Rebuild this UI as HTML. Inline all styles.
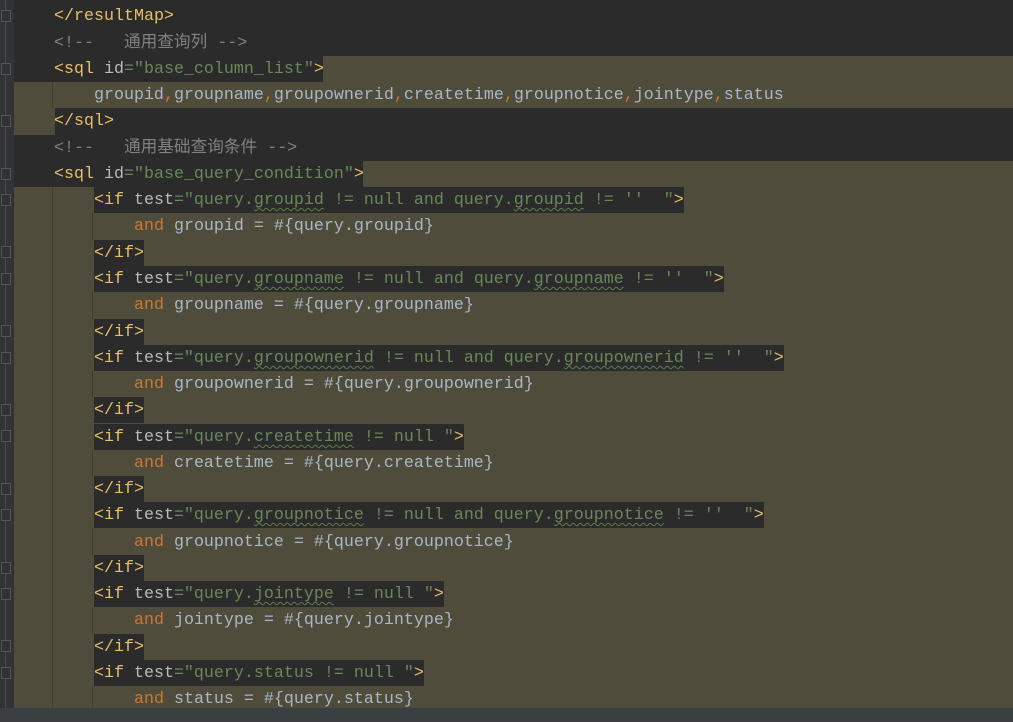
<!DOCTYPE html>
<html><head><meta charset="utf-8"><style>
html,body{margin:0;padding:0;}
body{width:1013px;height:722px;background:#2b2b2b;position:relative;overflow:hidden;
font-family:"Liberation Mono","Noto Sans CJK SC",monospace;font-size:16.67px;}
.gut{position:absolute;left:0;top:0;width:14px;height:722px;background:#313335;}
.gut:after{content:"";position:absolute;left:5px;top:0;height:722px;width:1px;background:#4a4c4e;}
.l{position:absolute;left:14px;width:999px;height:27px;line-height:28px;white-space:pre;color:#a9b7c6;}
.o{background:#4f4c3b;}
.d{background:#2b2b2b;display:inline-block;height:26px;line-height:27px;vertical-align:top;}
.t{color:#e8bf6a}.a{color:#bababa}.v{color:#6a8759}.k{color:#cc7832}.c{color:#808080}
.w{text-decoration:underline wavy #5f7d4a;text-decoration-thickness:1px;text-underline-offset:3px}
.g{position:absolute;width:1px;background:#3f3e36;}
.f{position:absolute;left:1px;width:10px;height:12px;border:1px solid #555;box-sizing:border-box;background:#313335;}
.bar{position:absolute;left:0;top:708px;width:1013px;height:14px;background:#3c3f41;}
</style></head><body>
<div class="gut"></div>
<div class="l" style="top:3px"><span>    </span><span class="t">&lt;/resultMap&gt;</span></div>
<div class="l" style="top:30px"><span class="c">    &lt;!--   通用查询列 --&gt;</span></div>
<div class="l" style="top:56px;height:26px;background:linear-gradient(90deg,#2b2b2b 309px,#4f4c3b 309px)">    <span class="t">&lt;sql </span><span class="a">id</span><span class="v">="base_column_list"</span><span class="t">&gt;</span></div>
<div class="l o" style="top:82px">        groupid<span class="k">,</span>groupname<span class="k">,</span>groupownerid<span class="k">,</span>createtime<span class="k">,</span>groupnotice<span class="k">,</span>jointype<span class="k">,</span>status</div>
<div class="l" style="top:108px;background:linear-gradient(90deg,#4f4c3b 41px,#2b2b2b 41px)">    <span class="t">&lt;/sql&gt;</span></div>
<div class="l" style="top:135px"><span class="c">    &lt;!--   通用基础查询条件 --&gt;</span></div>
<div class="l" style="top:161px;background:linear-gradient(90deg,#2b2b2b 349px,#4f4c3b 349px)">    <span class="t">&lt;sql </span><span class="a">id</span><span class="v">="base_query_condition"</span><span class="t">&gt;</span></div>

<div class="l o" style="top:187px">        <span class="d"><span class="t">&lt;if </span><span class="a">test</span><span class="v">="query.<span class="w">groupid</span> != null and query.<span class="w">groupid</span> != ''  "</span><span class="t">&gt;</span></span></div>
<div class="l o" style="top:213px">            <span class="k">and</span> groupid = #{query.groupid}</div>
<div class="l o" style="top:240px">        <span class="d"><span class="t">&lt;/if&gt;</span></span></div>
<div class="l o" style="top:266px">        <span class="d"><span class="t">&lt;if </span><span class="a">test</span><span class="v">="query.<span class="w">groupname</span> != null and query.<span class="w">groupname</span> != ''  "</span><span class="t">&gt;</span></span></div>
<div class="l o" style="top:292px">            <span class="k">and</span> groupname = #{query.groupname}</div>
<div class="l o" style="top:319px">        <span class="d"><span class="t">&lt;/if&gt;</span></span></div>
<div class="l o" style="top:345px">        <span class="d"><span class="t">&lt;if </span><span class="a">test</span><span class="v">="query.<span class="w">groupownerid</span> != null and query.<span class="w">groupownerid</span> != ''  "</span><span class="t">&gt;</span></span></div>
<div class="l o" style="top:371px">            <span class="k">and</span> groupownerid = #{query.groupownerid}</div>
<div class="l o" style="top:397px">        <span class="d"><span class="t">&lt;/if&gt;</span></span></div>
<div class="l o" style="top:424px">        <span class="d"><span class="t">&lt;if </span><span class="a">test</span><span class="v">="query.<span class="w">createtime</span> != null "</span><span class="t">&gt;</span></span></div>
<div class="l o" style="top:450px">            <span class="k">and</span> createtime = #{query.createtime}</div>
<div class="l o" style="top:476px">        <span class="d"><span class="t">&lt;/if&gt;</span></span></div>
<div class="l o" style="top:502px">        <span class="d"><span class="t">&lt;if </span><span class="a">test</span><span class="v">="query.<span class="w">groupnotice</span> != null and query.<span class="w">groupnotice</span> != ''  "</span><span class="t">&gt;</span></span></div>
<div class="l o" style="top:529px">            <span class="k">and</span> groupnotice = #{query.groupnotice}</div>
<div class="l o" style="top:555px">        <span class="d"><span class="t">&lt;/if&gt;</span></span></div>
<div class="l o" style="top:581px">        <span class="d"><span class="t">&lt;if </span><span class="a">test</span><span class="v">="query.<span class="w">jointype</span> != null "</span><span class="t">&gt;</span></span></div>
<div class="l o" style="top:607px">            <span class="k">and</span> jointype = #{query.jointype}</div>
<div class="l o" style="top:634px">        <span class="d"><span class="t">&lt;/if&gt;</span></span></div>
<div class="l o" style="top:660px">        <span class="d"><span class="t">&lt;if </span><span class="a">test</span><span class="v">="query.status != null "</span><span class="t">&gt;</span></span></div>
<div class="l o" style="top:686px">            <span class="k">and</span> status = #{query.status}</div>

<div class="g" style="left:52px;top:82px;height:26px"></div>
<div class="g" style="left:52px;top:187px;height:521px"></div>
<div class="g" style="left:92px;top:213px;height:27px"></div>
<div class="g" style="left:92px;top:292px;height:27px"></div>
<div class="g" style="left:92px;top:371px;height:26px"></div>
<div class="g" style="left:92px;top:450px;height:26px"></div>
<div class="g" style="left:92px;top:529px;height:26px"></div>
<div class="g" style="left:92px;top:607px;height:27px"></div>
<div class="g" style="left:92px;top:686px;height:22px"></div>

<div class="f" style="top:10px"></div>
<div class="f" style="top:63px"></div>
<div class="f" style="top:115px"></div>
<div class="f" style="top:168px"></div>
<div class="f" style="top:194px"></div>
<div class="f" style="top:246px"></div>
<div class="f" style="top:273px"></div>
<div class="f" style="top:325px"></div>
<div class="f" style="top:352px"></div>
<div class="f" style="top:404px"></div>
<div class="f" style="top:430px"></div>
<div class="f" style="top:483px"></div>
<div class="f" style="top:509px"></div>
<div class="f" style="top:562px"></div>
<div class="f" style="top:588px"></div>
<div class="f" style="top:640px"></div>
<div class="f" style="top:667px"></div>
<div class="bar"></div>
</body></html>
